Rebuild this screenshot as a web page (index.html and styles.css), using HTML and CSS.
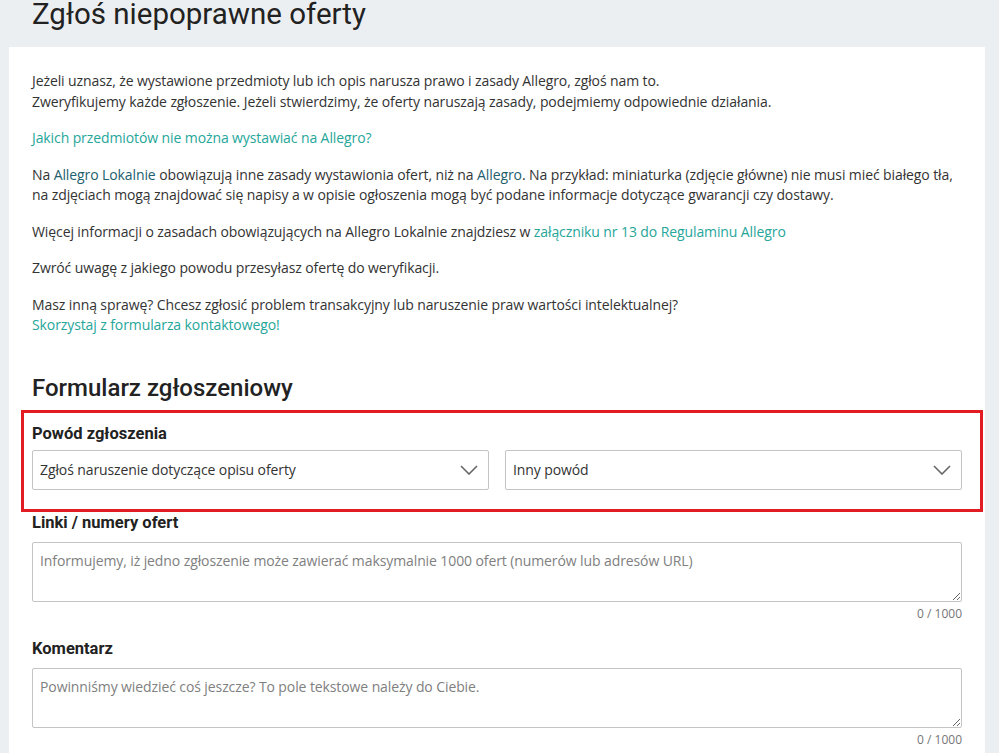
FILE: index.html
```html
<!DOCTYPE html>
<html lang="pl">
   <head>
      <meta charset="utf-8">
      <title>Zgłoś niepoprawne oferty</title>
      <link rel="stylesheet" href="styles.css">
   </head>
   <body>
      <h1 class="page-title">Zgłoś niepoprawne oferty</h1>

      <div class="card">
         <p>Jeżeli uznasz, że wystawione przedmioty lub ich opis narusza prawo i zasady Allegro, zgłoś nam to.<br>
            Zweryfikujemy każde zgłoszenie. Jeżeli stwierdzimy, że oferty naruszają zasady, podejmiemy odpowiednie działania.</p>

         <p><a href="#" class="link">Jakich przedmiotów nie można wystawiać na Allegro?</a></p>

         <p>Na <span class="brand">Allegro Lokalnie</span> obowiązują inne zasady wystawionia ofert, niż na <span class="brand">Allegro</span>. Na przykład: miniaturka (zdjęcie główne) nie musi mieć białego tła, na zdjęciach mogą znajdować się napisy a w opisie ogłoszenia mogą być podane informacje dotyczące gwarancji czy dostawy.</p>

         <p>Więcej informacji o zasadach obowiązujących na Allegro Lokalnie znajdziesz w <a href="#" class="link">załączniku nr 13 do Regulaminu Allegro</a></p>

         <p>Zwróć uwagę z jakiego powodu przesyłasz ofertę do weryfikacji.</p>

         <p>Masz inną sprawę? Chcesz zgłosić problem transakcyjny lub naruszenie praw wartości intelektualnej?<br>
            <a href="#" class="link">Skorzystaj z formularza kontaktowego!</a></p>

         <h2 class="form-title">Formularz zgłoszeniowy</h2>

         <div class="highlight">
            <div class="field-label">Powód zgłoszenia</div>
            <div class="select-row">
               <div class="select">
                  <span>Zgłoś naruszenie dotyczące opisu oferty</span>
                  <svg width="18" height="10" viewBox="0 0 18 10"><path d="M1 1 L9 9 L17 1" fill="none" stroke="#666" stroke-width="1.6"/></svg>
               </div>
               <div class="select">
                  <span>Inny powód</span>
                  <svg width="18" height="10" viewBox="0 0 18 10"><path d="M1 1 L9 9 L17 1" fill="none" stroke="#666" stroke-width="1.6"/></svg>
               </div>
            </div>
         </div>

         <div class="field">
            <div class="field-label">Linki / numery ofert</div>
            <textarea class="textarea" placeholder="Informujemy, iż jedno zgłoszenie może zawierać maksymalnie 1000 ofert (numerów lub adresów URL)"></textarea>
            <div class="counter">0 / 1000</div>
         </div>

         <div class="field">
            <div class="field-label">Komentarz</div>
            <textarea class="textarea" placeholder="Powinniśmy wiedzieć coś jeszcze? To pole tekstowe należy do Ciebie."></textarea>
            <div class="counter">0 / 1000</div>
         </div>
      </div>
   </body>
</html>
```

FILE: styles.css
```css
html, body {
   margin: 0;
   background-color: #eceff1;
   font-family: "Open Sans", sans-serif;
   color: #333;
   overflow: hidden;
}

body {
   padding: 0 14px 0 9px;
}

.page-title {
   margin: 0 0 19px 23px;
   font-family: Roboto, sans-serif;
   font-size: 29.5px;
   line-height: 28px;
   font-weight: 400;
   color: #222;
}

.card {
   background-color: #fff;
   padding: 24px 23px 40px;
   min-height: 800px;
}

.card p {
   margin: 0 0 16px;
   font-size: 14px;
   line-height: 20.5px;
   letter-spacing: -0.1px;
}

.link {
   color: #26a69a;
   text-decoration: none;
}

.brand {
   color: #23606e;
}

.form-title {
   margin: 37px 0 7px;
   font-family: Roboto, sans-serif;
   font-size: 24px;
   line-height: 30px;
   font-weight: 500;
   color: #222;
}

.highlight {
   border: 3px solid #e31b23;
   margin: 0 -21px 1px -11px;
   padding: 11px 18px 19px 8px;
}

.field-label {
   font-family: Roboto, sans-serif;
   font-size: 16.5px;
   line-height: 20px;
   font-weight: 700;
   color: #222;
   margin-bottom: 6px;
}

.select-row {
   display: grid;
   grid-template-columns: 1fr 1fr;
   gap: 16px;
}

.select {
   height: 40px;
   box-sizing: border-box;
   border: 1px solid #c4c4c4;
   border-radius: 2px;
   display: flex;
   align-items: center;
   justify-content: space-between;
   padding: 0 10px 0 7px;
   font-size: 14px;
   letter-spacing: -0.1px;
   color: #333;
}

.field {
   margin-bottom: 17px;
}

.field .field-label {
   margin-bottom: 9px;
}

.textarea {
   display: block;
   width: 100%;
   height: 60px;
   box-sizing: border-box;
   border: 1px solid #c4c4c4;
   border-radius: 2px;
   padding: 8px 7px;
   font-family: "Open Sans", sans-serif;
   font-size: 14px;
   line-height: 20px;
   letter-spacing: -0.1px;
   color: #333;
   resize: vertical;
   outline: none;
}

.textarea::placeholder {
   color: #808080;
}

.counter {
   margin-top: 4px;
   text-align: right;
   font-size: 12px;
   line-height: 16px;
   color: #767676;
}
```
